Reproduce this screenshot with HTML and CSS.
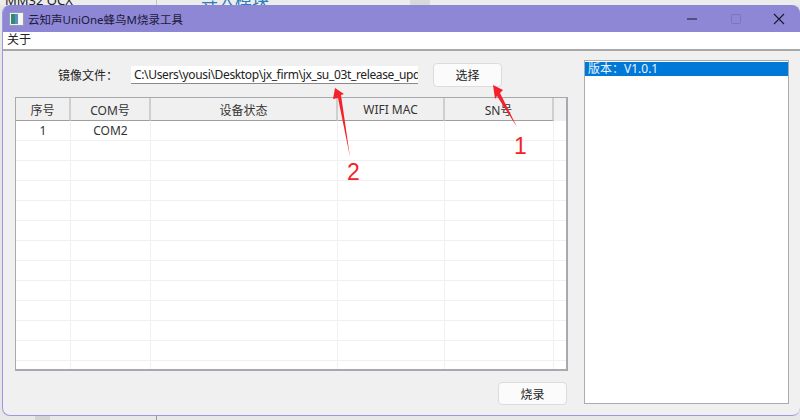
FILE: index.html
```html
<!DOCTYPE html>
<html lang="zh">
<head>
<meta charset="utf-8">
<title>云知声UniOne蜂鸟M烧录工具</title>
<link rel="stylesheet" href="styles.css">
</head>
<body>
<div class="desk-top">
  <span class="desk-a">MM32 OCX</span>
  <span class="desk-b">导入模块</span>
  <span class="desk-c"></span>
</div>
<main class="window">
  <header class="titlebar">
    <svg class="app-icon" width="15" height="14" viewBox="0 0 15 14">
      <rect x="0.5" y="0.5" width="14" height="13" fill="#eef0f2" stroke="#9a9aa8"/>
      <rect x="2" y="2" width="4" height="10" fill="#2f8a78"/>
      <rect x="6" y="2" width="3" height="10" fill="#5f8fc0"/>
      <rect x="9" y="2" width="4" height="10" fill="#f4f6f8"/>
    </svg>
    <span class="title-text">云知声UniOne蜂鸟M烧录工具</span>
    <div class="controls">
      <svg width="43.5" height="14" viewBox="0 0 43.5 14"><path d="M17 7h10" stroke="#1a1a2a" stroke-width="1.2" fill="none"/></svg>
      <svg width="43.5" height="14" viewBox="0 0 43.5 14"><rect x="17.5" y="2.5" width="9" height="9" rx="1" stroke="#7a76b8" fill="none"/></svg>
      <svg width="43.5" height="14" viewBox="0 0 43.5 14"><path d="M17 2l10 10M27 2L17 12" stroke="#1a1a2a" stroke-width="1.1" fill="none"/></svg>
    </div>
  </header>
  <nav class="menubar"><span>关于</span></nav>
  <section class="content">
    <div class="left">
      <div class="file-row">
        <span class="file-label">镜像文件：</span>
        <div class="file-input"><span>C:\Users\yousi\Desktop\jx_firm\jx_su_03t_release_upd</span></div>
        <button class="btn btn-select">选择</button>
      </div>
      <div class="table-wrap">
        <table class="grid">
          <colgroup>
            <col class="c1"><col class="c2"><col class="c3"><col class="c4"><col class="c5"><col>
          </colgroup>
          <thead>
            <tr><th>序号</th><th>COM号</th><th>设备状态</th><th>WIFI MAC</th><th>SN号</th><th class="filler"></th></tr>
          </thead>
          <tbody>
            <tr><td>1</td><td>COM2</td><td></td><td></td><td></td><td></td></tr>
            <tr><td></td><td></td><td></td><td></td><td></td><td></td></tr>
            <tr><td></td><td></td><td></td><td></td><td></td><td></td></tr>
            <tr><td></td><td></td><td></td><td></td><td></td><td></td></tr>
            <tr><td></td><td></td><td></td><td></td><td></td><td></td></tr>
            <tr><td></td><td></td><td></td><td></td><td></td><td></td></tr>
            <tr><td></td><td></td><td></td><td></td><td></td><td></td></tr>
            <tr><td></td><td></td><td></td><td></td><td></td><td></td></tr>
            <tr><td></td><td></td><td></td><td></td><td></td><td></td></tr>
            <tr><td></td><td></td><td></td><td></td><td></td><td></td></tr>
            <tr><td></td><td></td><td></td><td></td><td></td><td></td></tr>
            <tr><td></td><td></td><td></td><td></td><td></td><td></td></tr>
            <tr><td></td><td></td><td></td><td></td><td></td><td></td></tr>
          </tbody>
        </table>
      </div>
      <div class="burn-row"><button class="btn btn-burn">烧录</button></div>
    </div>
    <aside class="version-list"><div class="version-item">版本：V1.0.1</div></aside>
  </section>
</main>
<div class="desk-bottom">
  <span class="db-a"></span>
  <span class="db-b"></span>
  <span class="db-c"></span>
</div>
<svg class="annotations" width="800" height="420" viewBox="0 0 800 420">
  <polygon points="493,85 503,90 500,93 517,127 497,96 495,99" fill="#f5212a"/>
  <polygon points="335,88 344,94 341,95 350,157 338,98 333,99" fill="#f5212a"/>
  <text class="note" x="514" y="154">1</text>
  <text class="note" x="347" y="180">2</text>
</svg>
</body>
</html>
```

FILE: styles.css
```css
* { box-sizing: border-box; }
html, body { margin: 0; padding: 0; }
body {
  position: relative;
  width: 800px;
  height: 420px;
  overflow: hidden;
  background: #e6e6e6;
  font-family: "Noto Sans", "Noto Sans CJK SC", sans-serif;
  font-size: 12px;
  color: #222;
}
.desk-top {
  display: flex;
  height: 5px;
  overflow: hidden;
  line-height: 0;
  background: #ececec;
}
.desk-a {
  width: 157px;
  padding-left: 5px;
  font-size: 13px;
  color: #222;
  border-right: 1px solid #c4c4c4;
}
.desk-b {
  width: 253px;
  padding-left: 44px;
  font-size: 17px;
  line-height: 1px;
  color: #2b7cb8;
}
.desk-c { width: 20px; background: #d9d9d9; }
.desk-bottom { display: flex; height: 4px; background: #e8e8e8; }
.db-a { width: 35px; }
.db-b { width: 15px; background: #d4d4d4; }
.db-c { width: 107px; border-right: 1px solid #9a9a9a; }
.window {
  display: flex;
  flex-direction: column;
  width: 798px;
  height: 411px;
  margin-left: 2px;
  background: #f0f0f0;
  border: 1px solid #9c97de;
  border-top: 0;
  border-right: 0;
  border-radius: 8px;
  overflow: hidden;
}
.titlebar {
  display: flex;
  align-items: center;
  height: 27px;
  padding-left: 6px;
  background: #8d87d6;
  color: #1d1a3a;
  font-size: 11.5px;
}
.app-icon { margin-right: 4px; }
.title-text { flex: 1; }
.controls { display: flex; margin-right: -0.5px; }
.menubar {
  height: 19px;
  padding-left: 4px;
  line-height: 16px;
  background: #fff;
  border-bottom: 2px solid #a8a8a8;
}
.content {
  display: grid;
  grid-template-columns: 553px 205px;
  column-gap: 16px;
  padding: 9px 0 0 12px;
}
.left { display: flex; flex-direction: column; }
.file-row {
  display: flex;
  align-items: center;
  height: 24px;
  margin-top: 3px;
  padding-left: 43px;
}
.file-label { width: 73px; }
.file-input {
  width: 287px;
  height: 18px;
  padding-left: 3px;
  line-height: 18px;
  letter-spacing: -0.35px;
  background: #fff;
  border-bottom: 1px solid #8a8a8a;
  overflow: hidden;
  white-space: nowrap;
}
.btn {
  font: inherit;
  color: #222;
  height: 24px;
  width: 69px;
  padding: 0;
  background: #fbfbfb;
  border: 1px solid #dcdcdc;
  border-radius: 4px;
}
.btn-select { margin-left: 15px; }
.table-wrap {
  height: 274px;
  margin-top: 10px;
  background: #fff;
  border: 1px solid #a6a9ae;
  border-bottom-width: 2px;
  border-right-width: 2px;
  overflow: hidden;
}
.grid {
  width: 551px;
  table-layout: fixed;
  border-collapse: separate;
  border-spacing: 0;
}
.c1 { width: 55px; }
.c2 { width: 80px; }
.c3 { width: 187px; }
.c4 { width: 107px; }
.c5 { width: 109px; }
.grid th {
  height: 23px;
  padding: 1px 0 0;
  font-weight: 400;
  color: #333;
  background: #f0f0f0;
  border-bottom: 1px solid #9f9f9f;
  border-right: 2px solid #cfcfcf;
}
.grid th.filler { border-right: 0; border-bottom-color: #f0f0f0; }
.grid td {
  height: 20px;
  padding: 0;
  text-align: center;
  color: #333;
  border-right: 1px solid #f0f0f0;
  border-bottom: 1px solid #f0f0f0;
}
.burn-row { display: flex; justify-content: flex-end; margin-top: 11px; padding-right: 1px; }
.btn-burn { height: 23px; }
.version-list {
  height: 344px;
  padding: 1px 0 0;
  background: #fff;
  border: 1px solid #a9adb3;
}
.version-item {
  height: 14px;
  padding-left: 3px;
  line-height: 14px;
  background: #0078d7;
  color: #e8f3fc;
}
.annotations { position: absolute; left: 0; top: 0; pointer-events: none; }
.note { font-family: "Liberation Sans", sans-serif; font-size: 23px; fill: #f5212a; }
```
